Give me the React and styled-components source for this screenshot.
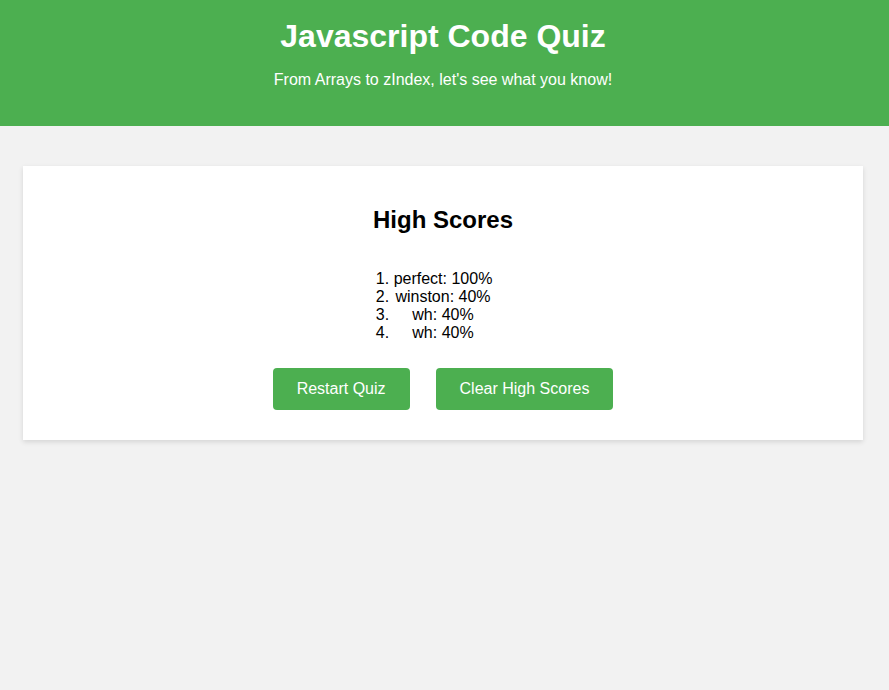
import React from "react";
import styled, { createGlobalStyle } from "styled-components";

const GlobalStyle = createGlobalStyle`
    body {
        margin: 0;
        background: #f2f2f2;
        font-family: "Liberation Sans", Arial, sans-serif;
        color: #000;
    }
`;

const scores = [
    { name: "perfect", score: 100 },
    { name: "winston", score: 40 },
    { name: "wh", score: 40 },
    { name: "wh", score: 40 },
];

const App = () => {
    return (
        <>
            <GlobalStyle />
            <Header>
                <Title>Javascript Code Quiz</Title>
                <Subtitle>From Arrays to zIndex, let's see what you know!</Subtitle>
            </Header>
            <Main>
                <Card>
                    <CardTitle>High Scores</CardTitle>
                    <ScoreList>
                        {scores.map((s, i) => (
                            <li key={i}>{s.name}: {s.score}%</li>
                        ))}
                    </ScoreList>
                    <ButtonRow>
                        <Button>Restart Quiz</Button>
                        <Button>Clear High Scores</Button>
                    </ButtonRow>
                </Card>
            </Main>
        </>
    );
};

const Header = styled.header`
    background: #4caf50;
    color: #fff;
    text-align: center;
    padding: 18px 23px 21px 20px;
`;

const Title = styled.h1`
    margin: 0;
    font-size: 32px;
    font-weight: 700;
`;

const Subtitle = styled.p`
    margin: 16px 0;
    font-size: 16px;
`;

const Main = styled.main`
    padding: 40px 26px 40px 23px;
`;

const Card = styled.section`
    background: #fff;
    padding: 20px;
    text-align: center;
    box-shadow: 0 2px 5px rgba(0, 0, 0, 0.12);
`;

const CardTitle = styled.h2`
    margin: 20px 0;
    font-size: 24px;
    font-weight: 700;
`;

const ScoreList = styled.ol`
    display: inline-block;
    margin: 16px 0;
    padding: 0;
    font-size: 16px;

    & li {
        text-align: center;
    }
`;

const ButtonRow = styled.div`
    display: flex;
    justify-content: center;
    gap: 26px;
    padding: 10px 0;
`;

const Button = styled.button`
    background: #4caf50;
    color: #fff;
    border: none;
    border-radius: 4px;
    padding: 12px 24px;
    font-family: "Liberation Sans", Arial, sans-serif;
    font-size: 16px;
    line-height: normal;
    cursor: pointer;
`;

export default App;
